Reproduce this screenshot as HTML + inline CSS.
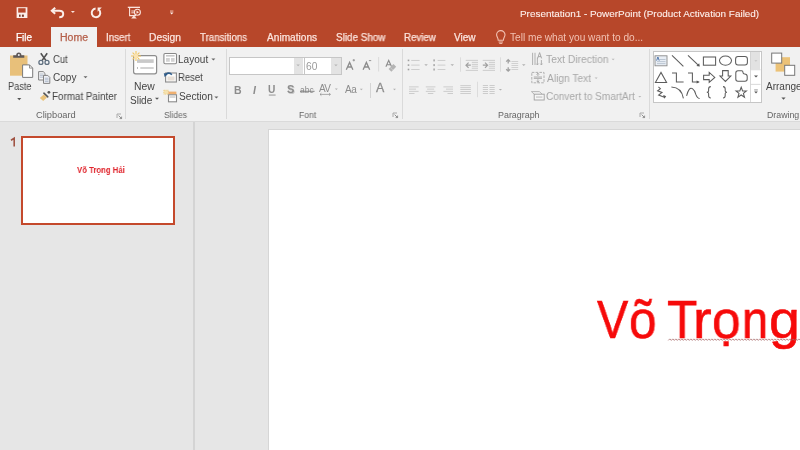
<!DOCTYPE html>
<html><head><meta charset="utf-8"><style>
html,body{margin:0;padding:0;width:800px;height:450px;overflow:hidden;background:#fff}
body{position:relative;font-family:"Liberation Sans",sans-serif}
.t{position:absolute;line-height:1;white-space:nowrap;will-change:transform}
.r{position:absolute;box-sizing:content-box}
.i{position:absolute;overflow:visible}
</style></head><body>
<div class="r" style="left:0;top:0;width:800px;height:47px;background:#b7472a"></div>
<div class="t" style="left:519.91px;top:9.11px;font-size:9.85px;color:#fdf0ec;transform:scaleX(1.0072);transform-origin:0 0;-webkit-text-stroke:0.1px #fdf0ec;">Presentation1 - PowerPoint (Product Activation Failed)</div>
<div class="r" style="left:51.3px;top:27.4px;width:45.5px;height:20px;background:#f1f1f1"></div>
<div class="t" style="left:16.21px;top:32.98px;font-size:10px;color:#ffffff;transform:scaleX(0.9933);transform-origin:0 0;-webkit-text-stroke:0.25px #ffffff;">File</div>
<div class="t" style="left:59.56px;top:32.98px;font-size:10px;color:#b5604b;transform:scaleX(1.0551);transform-origin:0 0;-webkit-text-stroke:0.25px #b5604b;">Home</div>
<div class="t" style="left:106.12px;top:32.98px;font-size:10px;color:#fbe3dc;transform:scaleX(0.9771);transform-origin:0 0;-webkit-text-stroke:0.25px #fbe3dc;">Insert</div>
<div class="t" style="left:149.18px;top:32.98px;font-size:10px;color:#fbe3dc;transform:scaleX(1.0287);transform-origin:0 0;-webkit-text-stroke:0.25px #fbe3dc;">Design</div>
<div class="t" style="left:200.31px;top:32.98px;font-size:10px;color:#fbe3dc;transform:scaleX(0.9687);transform-origin:0 0;-webkit-text-stroke:0.25px #fbe3dc;">Transitions</div>
<div class="t" style="left:266.90px;top:32.98px;font-size:10px;color:#fbe3dc;transform:scaleX(1.0143);transform-origin:0 0;-webkit-text-stroke:0.25px #fbe3dc;">Animations</div>
<div class="t" style="left:335.56px;top:32.98px;font-size:10px;color:#fbe3dc;transform:scaleX(0.9879);transform-origin:0 0;-webkit-text-stroke:0.25px #fbe3dc;">Slide Show</div>
<div class="t" style="left:403.72px;top:32.98px;font-size:10px;color:#fbe3dc;transform:scaleX(0.9719);transform-origin:0 0;-webkit-text-stroke:0.25px #fbe3dc;">Review</div>
<div class="t" style="left:454.35px;top:32.98px;font-size:10px;color:#fbe3dc;transform:scaleX(1.0070);transform-origin:0 0;-webkit-text-stroke:0.25px #fbe3dc;">View</div>
<div class="t" style="left:509.80px;top:32.98px;font-size:10px;color:#f2c2b3;transform:scaleX(1.0107);transform-origin:0 0;">Tell me what you want to do...</div>
<div class="r" style="left:0;top:47px;width:800px;height:74px;background:#f1f1f1"></div>
<div class="r" style="left:0;top:120.8px;width:800px;height:1.6px;background:#dadada"></div>
<div class="r" style="left:125px;top:48.5px;width:1px;height:70.5px;background:#dadada"></div>
<div class="r" style="left:226px;top:48.5px;width:1px;height:70.5px;background:#dadada"></div>
<div class="r" style="left:401.5px;top:48.5px;width:1px;height:70.5px;background:#dadada"></div>
<div class="r" style="left:648.5px;top:48.5px;width:1px;height:70.5px;background:#dadada"></div>
<div class="t" style="left:7.57px;top:81.98px;font-size:10px;color:#454545;transform:scaleX(0.9177);transform-origin:0 0;">Paste</div>
<div class="t" style="left:52.83px;top:54.98px;font-size:10px;color:#454545;transform:scaleX(0.9467);transform-origin:0 0;">Cut</div>
<div class="t" style="left:52.50px;top:72.98px;font-size:10px;color:#454545;transform:scaleX(1.0066);transform-origin:0 0;">Copy</div>
<div class="t" style="left:52.21px;top:91.98px;font-size:10px;color:#454545;transform:scaleX(0.9823);transform-origin:0 0;">Format Painter</div>
<div class="t" style="left:134.47px;top:81.98px;font-size:10px;color:#454545;transform:scaleX(1.0338);transform-origin:0 0;">New</div>
<div class="t" style="left:129.85px;top:95.98px;font-size:10px;color:#454545;">Slide</div>
<div class="t" style="left:178.40px;top:54.98px;font-size:10px;color:#454545;transform:scaleX(1.0051);transform-origin:0 0;">Layout</div>
<div class="t" style="left:178.44px;top:72.98px;font-size:10px;color:#454545;transform:scaleX(0.9505);transform-origin:0 0;">Reset</div>
<div class="t" style="left:178.74px;top:91.98px;font-size:10px;color:#454545;transform:scaleX(1.0171);transform-origin:0 0;">Section</div>
<div class="t" style="left:546.49px;top:54.64px;font-size:10.4px;color:#a8a8a8;transform:scaleX(0.9921);transform-origin:0 0;">Text Direction</div>
<div class="t" style="left:546.70px;top:73.64px;font-size:10.4px;color:#a8a8a8;transform:scaleX(0.9838);transform-origin:0 0;">Align Text</div>
<div class="t" style="left:546.20px;top:91.64px;font-size:10.4px;color:#a8a8a8;transform:scaleX(0.9670);transform-origin:0 0;">Convert to SmartArt</div>
<div class="t" style="left:766.00px;top:81.98px;font-size:10px;color:#454545;">Arrange</div>
<div class="t" style="left:36.29px;top:111.00px;font-size:8.8px;color:#666666;transform:scaleX(1.0545);transform-origin:0 0;">Clipboard</div>
<div class="t" style="left:164.02px;top:111.00px;font-size:8.8px;color:#666666;transform:scaleX(0.9624);transform-origin:0 0;">Slides</div>
<div class="t" style="left:298.92px;top:111.00px;font-size:8.8px;color:#666666;transform:scaleX(0.9672);transform-origin:0 0;">Font</div>
<div class="t" style="left:498.04px;top:111.00px;font-size:8.8px;color:#666666;transform:scaleX(1.0108);transform-origin:0 0;">Paragraph</div>
<div class="t" style="left:767.10px;top:111.00px;font-size:8.8px;color:#666666;">Drawing</div>
<svg class="i" style="left:14px;top:5px;" width="16" height="16" viewBox="14 5 16 16"><rect x="16.6" y="7.2" width="10.8" height="10.8" fill="#fbeee9"/><rect x="18.2" y="8.2" width="7.4" height="4.4" fill="#b7472a"/><rect x="19" y="14.6" width="1.6" height="2.2" fill="#7a3a2a"/><rect x="21.9" y="14.6" width="2" height="2.2" fill="#7a3a2a"/></svg>
<svg class="i" style="left:48px;top:4px;" width="32" height="18" viewBox="48 4 32 18"><path d="M52.5,10.8 H59.2 Q63.2,10.8 63.2,14 Q63.2,17.2 59.2,17.2" fill="none" stroke="#fbeee9" stroke-width="2"/><path d="M55.2,7.8 L51.8,10.8 L55.2,13.8" fill="none" stroke="#fbeee9" stroke-width="2"/><path d="M70.9,11 H74.9 L72.9,13.1 Z" fill="#fbe3dc"/></svg>
<svg class="i" style="left:88px;top:4px;" width="18" height="18" viewBox="88 4 18 18"><path d="M95.6,8.6 A4.3,4.3 0 1 0 99.1,9.9" fill="none" stroke="#fbeee9" stroke-width="2"/><path d="M97.6,7.6 H101.8 L97.6,11.8 Z" fill="#fbeee9"/></svg>
<svg class="i" style="left:124px;top:4px;" width="20" height="18" viewBox="124 4 20 18"><rect x="127.8" y="6.7" width="12.2" height="1.3" fill="#fbe3dc"/><path d="M129.6,8 V15.6 H136" fill="none" stroke="#fbe3dc" stroke-width="1.1"/><circle cx="137.4" cy="12.2" r="3" fill="none" stroke="#fbe3dc" stroke-width="1.1"/><path d="M136.5,10.6 L139,12.2 L136.5,13.8 Z" fill="#fbe3dc"/><path d="M131.3,11 H134.5 M131.3,12.8 H134" stroke="#fbe3dc" stroke-width="0.9"/><path d="M133.8,15.6 L131.2,18.4 H136.8 Z" fill="#fbe3dc"/></svg>
<svg class="i" style="left:166px;top:6px;" width="10" height="12" viewBox="166 6 10 12"><rect x="170" y="10.2" width="3.4" height="1.8" fill="#d88a74"/><path d="M169.9,12.6 H173.5 L171.7,14.6 Z" fill="#fff4f0"/></svg>
<svg class="i" style="left:494px;top:29px;" width="14" height="17" viewBox="494 29 14 17"><path d="M498.2,40.3 C498.2,37.8 496.6,37 496.6,34.8 A4.2,4.2 0 0 1 505,34.8 C505,37 503.4,37.8 503.4,40.3 Z" fill="none" stroke="#f2c2b3" stroke-width="1.1"/><path d="M498.6,42 H503 M499.3,43.4 H502.3" stroke="#f2c2b3" stroke-width="1"/></svg>
<svg class="i" style="left:6px;top:50px;" width="30" height="32" viewBox="6 50 30 32"><rect x="10" y="55.5" width="17.5" height="20.2" fill="#e8c07a"/><path d="M13.2,57.8 V55.2 H16.2 A2.6,2.6 0 0 1 21.4,55.2 H24.3 V57.8 Z" fill="#5e5858"/><circle cx="18.8" cy="55.0" r="1.0" fill="#f1f1f1"/><path d="M22.6,64.9 H29.5 L32.7,68.1 V77.4 H22.6 Z" fill="#fff" stroke="#7b7b7b" stroke-width="1"/><path d="M29.5,64.9 V68.1 H32.7" fill="none" stroke="#7b7b7b" stroke-width="0.8"/></svg>
<svg class="i" style="left:14px;top:94px;" width="10" height="8" viewBox="14 94 10 8"><path d="M17.2,98.1 H21.299999999999997 L19.25,100.14999999999999 Z" fill="#555"/></svg>
<svg class="i" style="left:36px;top:50px;" width="16" height="16" viewBox="36 50 16 16"><path d="M40.8,53.2 L46,60.6 M47.2,53.2 L42,60.6" stroke="#505050" stroke-width="1.6"/><circle cx="40.9" cy="62.4" r="2" fill="#f4f6f8" stroke="#607080" stroke-width="1.3"/><circle cx="47" cy="62.4" r="2" fill="#f4f6f8" stroke="#607080" stroke-width="1.3"/></svg>
<svg class="i" style="left:36px;top:68px;" width="16" height="18" viewBox="36 68 16 18"><path d="M38.6,71.6 H43.2 L45,73.4 V80 H38.6 Z" fill="#f4f4f6" stroke="#777" stroke-width="0.9"/><path d="M39.8,74 H43.5 M39.8,75.6 H43.5 M39.8,77.2 H43.5" stroke="#8a9bb0" stroke-width="0.6"/><path d="M43.5,75.4 H47.8 L49.8,77.4 V83.4 H43.5 Z" fill="#eef0f6" stroke="#777" stroke-width="0.9"/><path d="M44.8,78.2 H48.5 M44.8,79.8 H48.5 M44.8,81.4 H48.5" stroke="#8a9bb0" stroke-width="0.6"/></svg>
<svg class="i" style="left:82px;top:74px;" width="6" height="6" viewBox="82 74 6 6"><path d="M83.5,76.3 H87.5 L85.5,78.3 Z" fill="#666"/></svg>
<svg class="i" style="left:36px;top:88px;" width="16" height="14" viewBox="36 88 16 14"><path d="M43.9,93.2 L47.8,96.8" stroke="#555" stroke-width="1.6" stroke-linecap="round"/><circle cx="48.9" cy="92.3" r="1.4" fill="#555"/><path d="M43.8,94.4 L47,97.6 L43.2,101 L39.8,98 Z" fill="#e9c27a"/></svg>
<svg class="i" style="left:115.5px;top:113px;" width="8" height="8" viewBox="115.5 113 8 8"><path d="M116.5,118 V114 H120.5" fill="none" stroke="#999" stroke-width="0.8"/><path d="M118.1,115.6 L120.9,118.4 M121.1,116.6 V118.6 H119.1" fill="none" stroke="#777" stroke-width="0.8"/></svg>
<svg class="i" style="left:128px;top:48px;" width="32" height="30" viewBox="128 48 32 30"><rect x="133.6" y="55.6" width="23" height="18.2" rx="2" fill="#fff" stroke="#8d8d8d" stroke-width="1.2"/><rect x="137" y="59.3" width="16.7" height="3.6" fill="#c9c9c9"/><rect x="137" y="67.2" width="1" height="1.6" fill="#aaa"/><rect x="140.3" y="67.2" width="13.4" height="1.6" fill="#c9c9c9"/><g stroke="#f2c65c" stroke-width="1.1"><path d="M136,51 V61 M131,56 H141 M132.6,52.6 L139.4,59.4 M139.4,52.6 L132.6,59.4"/></g><circle cx="136" cy="56" r="2.3" fill="#fbe3b0"/></svg>
<svg class="i" style="left:152px;top:95px;" width="8" height="6" viewBox="152 95 8 6"><path d="M155,97.8 H159 L157.0,99.8 Z" fill="#555"/></svg>
<svg class="i" style="left:160px;top:50px;" width="20" height="18" viewBox="160 50 20 18"><rect x="163.9" y="53.5" width="12.6" height="10.3" rx="1.2" fill="#fff" stroke="#888" stroke-width="1.1"/><rect x="166" y="55" width="8.6" height="1.6" fill="#c8c8c8"/><rect x="166" y="58" width="3.8" height="3.8" fill="#d3d3d3"/><rect x="171" y="58" width="3.6" height="3.8" fill="#d3d3d3"/></svg>
<svg class="i" style="left:210px;top:58px;" width="8" height="6" viewBox="210 58 8 6"><path d="M211.4,58.6 H215.4 L213.4,60.6 Z" fill="#666"/></svg>
<svg class="i" style="left:160px;top:68px;" width="20" height="18" viewBox="160 68 20 18"><rect x="165.6" y="73" width="10.8" height="9" fill="#fbfbfb" stroke="#8a8a8a" stroke-width="1.1"/><rect x="167.5" y="76.5" width="7" height="4" fill="#e8dfd6"/><path d="M171.8,74.8 Q169.5,71.6 165.6,74.4" fill="none" stroke="#2e5c8a" stroke-width="1.5"/><path d="M163.8,73 L164.6,77 L167.6,74.4 Z" fill="#2e5c8a"/></svg>
<svg class="i" style="left:160px;top:86px;" width="20" height="18" viewBox="160 86 20 18"><rect x="163.8" y="90.2" width="4.6" height="4" fill="#f5e2b0" stroke="#ebca7a" stroke-width="0.8" stroke-dasharray="1 0.8"/><rect x="168.4" y="91.6" width="8" height="2.8" fill="#f0b070"/><rect x="168.5" y="94.8" width="8" height="7" fill="#fff" stroke="#8a8a8a" stroke-width="1.1"/><rect x="169.6" y="96.2" width="5.8" height="1.6" fill="#d0d0d0"/></svg>
<svg class="i" style="left:212px;top:96px;" width="8" height="6" viewBox="212 96 8 6"><path d="M214.4,96.6 H218.4 L216.4,98.6 Z" fill="#666"/></svg>
<div class="r" style="left:229px;top:56.5px;width:73.5px;height:16px;border:1px solid #c6c6c6;background:#fff"></div>
<div class="r" style="left:293.5px;top:57.5px;width:9px;height:16px;background:#e3e3e3"></div>
<div class="r" style="left:303.7px;top:56.5px;width:36px;height:16px;border:1px solid #c6c6c6;background:#fff"></div>
<div class="r" style="left:331px;top:57.5px;width:9.7px;height:16px;background:#e3e3e3"></div>
<svg class="i" style="left:290px;top:60px;" width="50" height="10" viewBox="290 60 50 10"><path d="M296.4,64.5 H299.9 L298.15,66.25 Z" fill="#b5b5b5"/><path d="M334.2,64.5 H337.7 L335.95,66.25 Z" fill="#b5b5b5"/></svg>
<svg class="i" style="left:340px;top:54px;" width="60" height="22" viewBox="340 54 60 22"><path d="M346.3,69.8 L349.6,62.4 L352.9,69.8 M347.5,67 H351.7" fill="none" stroke="#8c8c8c" stroke-width="1.3"/><path d="M352.6,60.2 H355 M353.8,59 V61.4" stroke="#8c8c8c" stroke-width="0.8"/><path d="M363.1,69.8 L366.4,62.4 L369.7,69.8 M364.3,67 H368.5" fill="none" stroke="#8c8c8c" stroke-width="1.3"/><path d="M368.9,60.6 H371.2" stroke="#8c8c8c" stroke-width="0.9"/><rect x="378.3" y="57" width="0.8" height="14.5" fill="#d4d4d4"/><path d="M385.9,66.8 L388.7,60.4 L391.6,66.8 M386.9,64.8 H390.6" fill="none" stroke="#8c8c8c" stroke-width="1.1"/><path d="M388.6,69 L393.4,64 L396.2,66.8 L391.4,71.8 Z" fill="#b4b4b4"/><path d="M390.2,67.4 L393,70.2" stroke="#d8d8d8" stroke-width="0.6"/></svg>
<div class="t" style="left:234.00px;top:84.91px;font-size:10.5px;color:#8c8c8c;font-weight:bold">B</div>
<div class="t" style="left:252.60px;top:84.91px;font-size:10.5px;color:#8c8c8c;font-style:italic;font-weight:bold">I</div>
<div class="t" style="left:268.40px;top:84.96px;font-size:10.2px;color:#8c8c8c;font-weight:bold">U</div>
<svg class="i" style="left:266px;top:84px;" width="12" height="14" viewBox="266 84 12 14"><rect x="268.8" y="94.6" width="6.8" height="0.9" fill="#8c8c8c"/></svg>
<div class="t" style="left:286.60px;top:84.49px;font-size:11px;color:#8c8c8c;font-weight:bold;text-shadow:0.8px 0.8px 0 #c8c8c8">S</div>
<div class="t" style="left:300.40px;top:86.40px;font-size:8.5px;color:#8c8c8c;">abc</div>
<svg class="i" style="left:298px;top:84px;" width="18" height="12" viewBox="298 84 18 12"><rect x="300" y="90.8" width="14.6" height="0.9" fill="#7c7c7c"/></svg>
<div class="t" style="left:318.80px;top:84.03px;font-size:10px;color:#8c8c8c;letter-spacing:-0.8px">AV</div>
<svg class="i" style="left:316px;top:92px;" width="40" height="8" viewBox="316 92 40 8"><path d="M320,94.4 H330.4 M321.4,93.2 L320,94.4 L321.4,95.6 M329,93.2 L330.4,94.4 L329,95.6" fill="none" stroke="#8c8c8c" stroke-width="0.7"/><path d="M334.8,88.6 H337.8 L336.3,90.1 Z" fill="#b0b0b0"/></svg>
<div class="t" style="left:344.60px;top:84.53px;font-size:10px;color:#8c8c8c;letter-spacing:-0.4px">Aa</div>
<svg class="i" style="left:358px;top:86px;" width="6" height="6" viewBox="358 86 6 6"><path d="M359.8,88.8 H362.8 L361.3,90.3 Z" fill="#b0b0b0"/></svg>
<div class="r" style="left:369.5px;top:82.5px;width:0.8px;height:15px;background:#d4d4d4"></div>
<div class="t" style="left:376.40px;top:82.30px;font-size:12.4px;color:#8c8c8c;-webkit-text-stroke:0.3px #8c8c8c">A</div>
<svg class="i" style="left:390px;top:86px;" width="8" height="6" viewBox="390 86 8 6"><path d="M393,88.8 H396 L394.5,90.3 Z" fill="#b0b0b0"/></svg>
<svg class="i" style="left:391.6px;top:112.2px;" width="8" height="8" viewBox="391.6 112.2 8 8"><path d="M392.6,117.2 V113.2 H396.6" fill="none" stroke="#999" stroke-width="0.8"/><path d="M394.20000000000005,114.8 L397.0,117.60000000000001 M397.20000000000005,115.8 V117.8 H395.20000000000005" fill="none" stroke="#777" stroke-width="0.8"/></svg>
<svg class="i" style="left:400px;top:50px;" width="250" height="72" viewBox="400 50 250 72"><rect x="407.7" y="59.6" width="1.6" height="1.6" fill="#a0a0a0"/><rect x="411.2" y="59.949999999999996" width="8.4" height="0.9" fill="#cacaca"/><rect x="433.4" y="59.4" width="1.4" height="2" fill="#a0a0a0"/><rect x="437.6" y="59.949999999999996" width="7.8" height="0.9" fill="#cacaca"/><rect x="407.7" y="64.3" width="1.6" height="1.6" fill="#a0a0a0"/><rect x="411.2" y="64.64999999999999" width="8.4" height="0.9" fill="#cacaca"/><rect x="433.4" y="64.1" width="1.4" height="2" fill="#a0a0a0"/><rect x="437.6" y="64.64999999999999" width="7.8" height="0.9" fill="#cacaca"/><rect x="407.7" y="68.7" width="1.6" height="1.6" fill="#a0a0a0"/><rect x="411.2" y="69.05" width="8.4" height="0.9" fill="#cacaca"/><rect x="433.4" y="68.5" width="1.4" height="2" fill="#a0a0a0"/><rect x="437.6" y="69.05" width="7.8" height="0.9" fill="#cacaca"/><path d="M424.3,64.3 H427.8 L426.05,66.05 Z" fill="#b0b0b0"/><path d="M450.5,64.3 H454.0 L452.25,66.05 Z" fill="#b0b0b0"/><rect x="460" y="57.3" width="0.8" height="14.5" fill="#d8d8d8"/><rect x="465.7" y="59.9" width="12.3" height="0.8" fill="#c4c4c4"/><rect x="482.7" y="59.9" width="12.3" height="0.8" fill="#c4c4c4"/><rect x="471.8" y="61.9" width="6.2" height="0.8" fill="#c4c4c4"/><rect x="488.8" y="61.9" width="6.2" height="0.8" fill="#c4c4c4"/><rect x="471.8" y="63.9" width="6.2" height="0.8" fill="#c4c4c4"/><rect x="488.8" y="63.9" width="6.2" height="0.8" fill="#c4c4c4"/><rect x="471.8" y="65.8" width="6.2" height="0.8" fill="#c4c4c4"/><rect x="488.8" y="65.8" width="6.2" height="0.8" fill="#c4c4c4"/><rect x="471.8" y="67.8" width="6.2" height="0.8" fill="#c4c4c4"/><rect x="488.8" y="67.8" width="6.2" height="0.8" fill="#c4c4c4"/><rect x="465.7" y="69.89999999999999" width="12.3" height="0.8" fill="#c4c4c4"/><rect x="482.7" y="69.89999999999999" width="12.3" height="0.8" fill="#c4c4c4"/><path d="M470.8,65.2 H466 M468.6,62.6 L466,65.2 L468.6,67.8" fill="none" stroke="#a0a0a0" stroke-width="1.2"/><path d="M482.8,65.2 H487.6 M485,62.6 L487.6,65.2 L485,67.8" fill="none" stroke="#a0a0a0" stroke-width="1.2"/><rect x="500.2" y="57.3" width="0.8" height="14.5" fill="#d8d8d8"/><path d="M508.2,59.6 V63.4 M508.2,67.2 V71.2 M506.2,61.6 L508.2,59.6 L510.2,61.6 M506.2,69.2 L508.2,71.2 L510.2,69.2" fill="none" stroke="#a0a0a0" stroke-width="1.3"/><rect x="511.4" y="61.2" width="6.8" height="0.8" fill="#cacaca"/><rect x="511.4" y="63.2" width="6.8" height="0.8" fill="#cacaca"/><rect x="511.4" y="65.19999999999999" width="6.8" height="0.8" fill="#cacaca"/><rect x="511.4" y="67.19999999999999" width="6.8" height="0.8" fill="#cacaca"/><rect x="511.4" y="69.19999999999999" width="6.8" height="0.8" fill="#cacaca"/><path d="M522,64.3 H525.5 L523.75,66.05 Z" fill="#b0b0b0"/><rect x="409" y="86.5" width="9.6" height="0.8" fill="#c4c4c4"/><rect x="409" y="88.69999999999999" width="7" height="0.8" fill="#c4c4c4"/><rect x="409" y="90.89999999999999" width="9.6" height="0.8" fill="#c4c4c4"/><rect x="409" y="93.0" width="5.5" height="0.8" fill="#c4c4c4"/><rect x="425.8" y="86.5" width="9.6" height="0.8" fill="#c4c4c4"/><rect x="427.1" y="88.69999999999999" width="7" height="0.8" fill="#c4c4c4"/><rect x="425.8" y="90.89999999999999" width="9.6" height="0.8" fill="#c4c4c4"/><rect x="427.85" y="93.0" width="5.5" height="0.8" fill="#c4c4c4"/><rect x="443.4" y="86.5" width="9.6" height="0.8" fill="#c4c4c4"/><rect x="446" y="88.69999999999999" width="7" height="0.8" fill="#c4c4c4"/><rect x="443.4" y="90.89999999999999" width="9.6" height="0.8" fill="#c4c4c4"/><rect x="447.5" y="93.0" width="5.5" height="0.8" fill="#c4c4c4"/><rect x="460.3" y="85.3" width="10.6" height="0.8" fill="#c4c4c4"/><rect x="460.3" y="87.3" width="10.6" height="0.8" fill="#c4c4c4"/><rect x="460.3" y="89.19999999999999" width="10.6" height="0.8" fill="#c4c4c4"/><rect x="460.3" y="91.19999999999999" width="10.6" height="0.8" fill="#c4c4c4"/><rect x="460.3" y="93.1" width="10.6" height="0.8" fill="#c4c4c4"/><rect x="477" y="81.7" width="0.8" height="15.5" fill="#d8d8d8"/><rect x="482.8" y="85.19999999999999" width="5.2" height="0.8" fill="#c4c4c4"/><rect x="489.5" y="85.19999999999999" width="5.2" height="0.8" fill="#c4c4c4"/><rect x="482.8" y="87.19999999999999" width="5.2" height="0.8" fill="#c4c4c4"/><rect x="489.5" y="87.19999999999999" width="5.2" height="0.8" fill="#c4c4c4"/><rect x="482.8" y="89.19999999999999" width="5.2" height="0.8" fill="#c4c4c4"/><rect x="489.5" y="89.19999999999999" width="5.2" height="0.8" fill="#c4c4c4"/><rect x="482.8" y="91.19999999999999" width="5.2" height="0.8" fill="#c4c4c4"/><rect x="489.5" y="91.19999999999999" width="5.2" height="0.8" fill="#c4c4c4"/><rect x="482.8" y="93.19999999999999" width="5.2" height="0.8" fill="#c4c4c4"/><rect x="489.5" y="93.19999999999999" width="5.2" height="0.8" fill="#c4c4c4"/><path d="M498.8,89 H502.0 L500.40000000000003,90.6 Z" fill="#b0b0b0"/><path d="M532.6,52.8 V65 M535,52.8 V65" stroke="#a8a8a8" stroke-width="0.9"/><path d="M537.4,57.6 V65 M541.4,60 V65" stroke="#a8a8a8" stroke-width="0.9"/><path d="M536.3,63.6 L537.4,65 L538.5,63.6 M540.3,63.6 L541.4,65 L542.5,63.6" fill="none" stroke="#a8a8a8" stroke-width="0.8"/><path d="M537.6,58.4 L539.6,52.6 L541.6,58.4 M538.3,56.6 H540.9" fill="none" stroke="#a0a0a0" stroke-width="0.9"/><path d="M611.6,58.8 H614.6 L613.1,60.3 Z" fill="#b8b8b8"/><rect x="531.8" y="72.4" width="12.2" height="10.4" fill="none" stroke="#a8a8a8" stroke-width="0.9" stroke-dasharray="2.6 1.2"/><path d="M537.9,73.2 V76 M537.9,79.2 V82.2 M536.6,74.6 L537.9,73.2 L539.2,74.6 M536.6,80.8 L537.9,82.2 L539.2,80.8 M533.8,77 H542 M533.8,78.4 H542" fill="none" stroke="#a0a0a0" stroke-width="0.8"/><path d="M594.6,77.4 H597.6 L596.1,78.9 Z" fill="#b8b8b8"/><path d="M531.4,91.6 H539.4 L542,94 M531.4,91.6 L534,94" fill="none" stroke="#b0b0b0" stroke-width="0.9"/><rect x="534.2" y="94.2" width="10" height="5.8" fill="#f6f6f6" stroke="#a0a0a0" stroke-width="0.9"/><rect x="536" y="96.4" width="6.4" height="1.3" fill="#c8c8c8"/><path d="M638.3,96 H641.3 L639.8,97.5 Z" fill="#b8b8b8"/></svg>
<svg class="i" style="left:638.8px;top:112.3px;" width="8" height="8" viewBox="638.8 112.3 8 8"><path d="M639.8,117.3 V113.3 H643.8" fill="none" stroke="#999" stroke-width="0.8"/><path d="M641.4,114.89999999999999 L644.1999999999999,117.7 M644.4,115.89999999999999 V117.89999999999999 H642.4" fill="none" stroke="#777" stroke-width="0.8"/></svg>
<div class="r" style="left:652.5px;top:51px;width:107.8px;height:50px;border:1px solid #c6c6c6;background:#fff"></div>
<div class="r" style="left:750.3px;top:52px;width:10px;height:17.4px;background:#e2e2e2"></div>
<svg class="i" style="left:650px;top:48px;" width="150" height="74" viewBox="650 48 150 74"><rect x="750" y="52" width="0.8" height="50" fill="#d0d0d0"/><rect x="750.5" y="69.4" width="10" height="0.8" fill="#d0d0d0"/><rect x="750.5" y="83.9" width="10" height="0.8" fill="#d0d0d0"/><path d="M754.4,60.2 H757.4 L755.9,61.7 Z" fill="#c4c4c4"/><path d="M754,75.4 H758 L756.0,77.4 Z" fill="#555"/><rect x="754.2" y="89.6" width="3.6" height="0.7" fill="#666"/><path d="M754.2,91.6 H757.8000000000001 L756.0,93.39999999999999 Z" fill="#555"/><rect x="655" y="55.8" width="12" height="10" fill="#e9eef5" stroke="#8a8a8a" stroke-width="0.9"/><path d="M659.5,59.5 H665.5 M657,61.6 H665.5 M657,63.6 H665.5" stroke="#a8b4c4" stroke-width="0.7"/><path d="M656.6,60.6 L657.9,57 L659.2,60.6" fill="none" stroke="#2e5c9a" stroke-width="0.8"/><path d="M672,55.4 L683.4,66.4" fill="none" stroke="#5c5c5c" stroke-width="1.05"/><path d="M688,55.4 L698.8,65.6" fill="none" stroke="#5c5c5c" stroke-width="1.05"/><path d="M699.8,66.6 L696.4,66 L699.2,63.2 Z" fill="#555"/><rect x="703.4" y="57" width="12.2" height="8.2" fill="none" stroke="#5c5c5c" stroke-width="1.05"/><ellipse cx="725.5" cy="60.6" rx="6" ry="4.6" fill="none" stroke="#5c5c5c" stroke-width="1.05"/><rect x="735.6" y="56.5" width="11.8" height="8.5" rx="2.4" fill="none" stroke="#5c5c5c" stroke-width="1.05"/><path d="M655.4,82.5 L661,72.4 L666.6,82.5 Z" fill="none" stroke="#5c5c5c" stroke-width="1.05"/><path d="M672,73 H676.4 V82 H683.6" fill="none" stroke="#5c5c5c" stroke-width="1.05"/><path d="M688,73 H692.4 V82 H698.4" fill="none" stroke="#5c5c5c" stroke-width="1.05"/><path d="M699.8,82 L696.6,80.4 V83.6 Z" fill="#555"/><path d="M703.6,75.2 H709.2 V72.4 L714.8,77.4 L709.2,82.4 V79.6 H703.6 Z" fill="none" stroke="#5c5c5c" stroke-width="1.05"/><path d="M722.6,70.6 H728.2 V76 H730.8 L725.4,81.4 L720,76 H722.6 Z" fill="none" stroke="#5c5c5c" stroke-width="1.05"/><path d="M735.8,79 V73 Q735.8,70.8 738,70.8 H741.6 Q743,70.8 743,72.6 Q743,74 744.6,74 Q747.2,74 747.2,76.6 V79 Q747.2,81.2 745,81.2 H738 Q735.8,81.2 735.8,79 Z" fill="none" stroke="#5c5c5c" stroke-width="1.05"/><path d="M658.4,86.8 L660.4,88.6 L657.6,90.8 L662,92.4 L658.6,95 L662.4,96.6 Q663.6,97.2 665,96.4 M663.4,95.6 L665.4,96.4 L664.2,98.2" fill="none" stroke="#5c5c5c" stroke-width="1.05"/><path d="M671.4,87 Q681.6,87.4 683.4,98.4" fill="none" stroke="#5c5c5c" stroke-width="1.05"/><path d="M686.6,95.8 Q689,86.4 692.4,88.6 Q694.6,90 695.8,94.4 Q697.4,98.6 699.6,98.4" fill="none" stroke="#5c5c5c" stroke-width="1.05"/><path d="M710.8,86.6 Q708.6,86.6 708.6,89 V91 Q708.6,92.2 706.8,92.2 Q708.6,92.2 708.6,93.4 V95.6 Q708.6,98 710.8,98" fill="none" stroke="#5c5c5c" stroke-width="1.05"/><path d="M723,86.6 Q725.2,86.6 725.2,89 V91 Q725.2,92.2 727,92.2 Q725.2,92.2 725.2,93.4 V95.6 Q725.2,98 723,98" fill="none" stroke="#5c5c5c" stroke-width="1.05"/><path d="M741.2,87.3 L742.6,90.9 L746.4,91 L743.4,93.4 L744.5,97.2 L741.2,95 L737.9,97.2 L739,93.4 L736,91 L739.8,90.9 Z" fill="none" stroke="#5c5c5c" stroke-width="1.05"/><rect x="775.6" y="57.2" width="14.4" height="14.4" fill="#ecc277"/><rect x="771.7" y="53.1" width="10" height="10" fill="#fff" stroke="#777" stroke-width="1"/><rect x="784.7" y="65.3" width="10" height="10" fill="#fff" stroke="#777" stroke-width="1"/><path d="M781.4,97.6 H785.6 L783.5,99.69999999999999 Z" fill="#555"/></svg>
<div class="t" style="left:305.50px;top:61.81px;font-size:10.2px;color:#9a9a9a;transform:scaleX(0.9804);transform-origin:0 0;">60</div>
<div class="r" style="left:0;top:122.4px;width:800px;height:328px;background:#e6e6e6"></div>
<div class="r" style="left:193px;top:122px;width:2px;height:328px;background:#d4d4d4"></div>
<svg class="i" style="left:8px;top:136px" width="12" height="12" viewBox="8 136 12 12"><path d="M14.2,146.4 V138.3 L11,140.3" fill="none" stroke="#a05444" stroke-width="1.6"/></svg>
<div class="r" style="left:20.6px;top:136.2px;width:150.4px;height:85px;border:2.4px solid #c4492c;background:#fff"></div>
<div class="t" style="left:76.71px;top:165.32px;font-size:9.6px;color:#e0242c;font-weight:bold;transform:scaleX(0.8075);transform-origin:0 0;">Võ Trọng Hải</div>
<div class="r" style="left:268px;top:129px;width:540px;height:330px;border:1px solid #d6d6d6;background:#fff"></div>
<div class="t" style="left:597.29px;top:292.86px;font-size:54.5px;color:#f60a0a;-webkit-text-stroke:0.6px #f60a0a;transform:scaleX(0.859);transform-origin:0 0">V</div>
<div class="t" style="left:628.72px;top:292.86px;font-size:54.5px;color:#f60a0a;-webkit-text-stroke:0.6px #f60a0a;transform:scaleX(0.909);transform-origin:0 0">õ</div>
<div class="t" style="left:667.48px;top:292.86px;font-size:54.5px;color:#f60a0a;-webkit-text-stroke:0.6px #f60a0a;transform:scaleX(0.912);transform-origin:0 0">T</div>
<div class="t" style="left:693.28px;top:292.86px;font-size:54.5px;color:#f60a0a;-webkit-text-stroke:0.6px #f60a0a;transform:scaleX(1.028);transform-origin:0 0">r</div>
<div class="t" style="left:711.84px;top:292.86px;font-size:54.5px;color:#f60a0a;-webkit-text-stroke:0.6px #f60a0a;transform:scaleX(0.944);transform-origin:0 0">ọ</div>
<div class="t" style="left:741.87px;top:292.86px;font-size:54.5px;color:#f60a0a;-webkit-text-stroke:0.6px #f60a0a;transform:scaleX(0.864);transform-origin:0 0">n</div>
<div class="t" style="left:769.37px;top:292.86px;font-size:54.5px;color:#f60a0a;-webkit-text-stroke:0.6px #f60a0a;transform:scaleX(1.020);transform-origin:0 0">g</div>
<svg class="i" style="left:660px;top:334px;" width="140" height="10" viewBox="660 334 140 10"><path d="M668.3,340.4 L669.8,338.9 L671.3,340.4 L672.8,338.9 L674.3,340.4 L675.8,338.9 L677.3,340.4 L678.8,338.9 L680.3,340.4 L681.8,338.9 L683.3,340.4 L684.8,338.9 L686.3,340.4 L687.8,338.9 L689.3,340.4 L690.8,338.9 L692.3,340.4 L693.8,338.9 L695.3,340.4 L696.8,338.9 L698.3,340.4 L699.8,338.9 L701.3,340.4 L702.8,338.9 L704.3,340.4 L705.8,338.9 L707.3,340.4 L708.8,338.9 L710.3,340.4 L711.8,338.9 L713.3,340.4 L714.8,338.9 L716.3,340.4 L717.8,338.9 L719.3,340.4 L720.8,338.9 L722.3,340.4 L723.8,338.9 L725.3,340.4 L726.8,338.9 L728.3,340.4 L729.8,338.9 L731.3,340.4 L732.8,338.9 L734.3,340.4 L735.8,338.9 L737.3,340.4 L738.8,338.9 L740.3,340.4 L741.8,338.9 L743.3,340.4 L744.8,338.9 L746.3,340.4 L747.8,338.9 L749.3,340.4 L750.8,338.9 L752.3,340.4 L753.8,338.9 L755.3,340.4 L756.8,338.9 L758.3,340.4 L759.8,338.9 L761.3,340.4 L762.8,338.9 L764.3,340.4 L765.8,338.9 L767.3,340.4 L768.8,338.9 L770.3,340.4 L771.8,338.9 L773.3,340.4 L774.8,338.9 L776.3,340.4 L777.8,338.9 L779.3,340.4 L780.8,338.9 L782.3,340.4 L783.8,338.9 L785.3,340.4 L786.8,338.9 L788.3,340.4 L789.8,338.9 L791.3,340.4 L792.8,338.9 L794.3,340.4 L795.8,338.9 L797.3,340.4 L798.8,338.9 L800.3,340.4" fill="none" stroke="#a86a6a" stroke-width="0.8"/></svg>
</body></html>
